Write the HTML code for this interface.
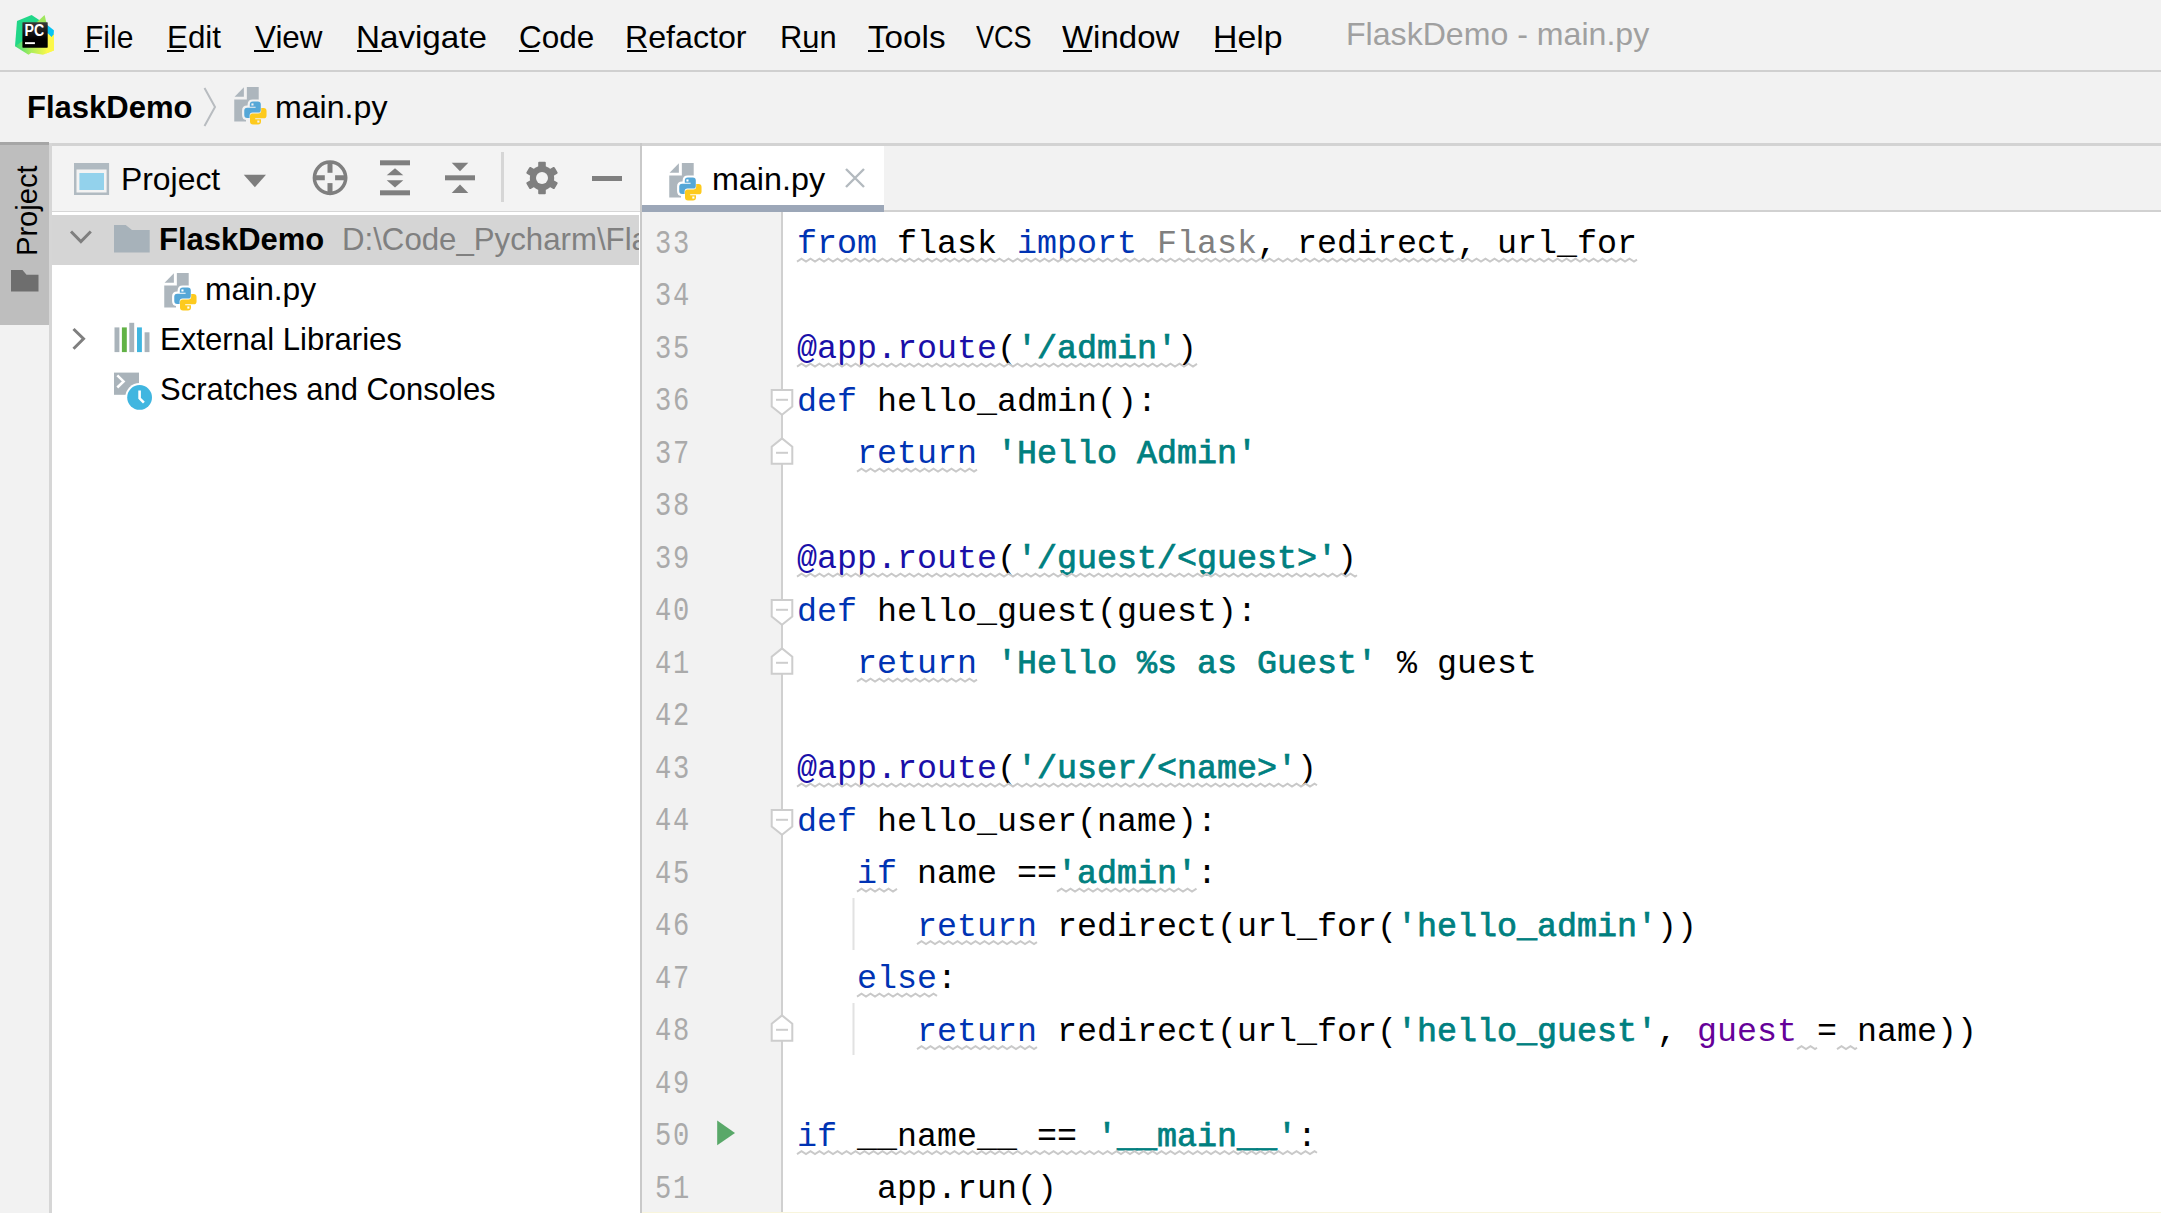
<!DOCTYPE html>
<html><head><meta charset="utf-8">
<style>
*{margin:0;padding:0;box-sizing:border-box}
html,body{width:2161px;height:1213px;overflow:hidden;background:#f2f2f2}
body{position:relative;font-family:"Liberation Sans",sans-serif;color:#000}
.a{position:absolute}
.t{position:absolute;white-space:pre;line-height:1;transform-origin:0 0}
svg{position:absolute;overflow:visible}
.code{position:absolute;left:797px;white-space:pre;font-family:"Liberation Mono",monospace;font-size:33.33px;line-height:1;color:#000}
.ln{position:absolute;white-space:pre;font-family:"Liberation Mono",monospace;font-size:33.33px;line-height:1;color:#aaaaaa}
.k{color:#0033b3}
.d{color:#1a0fa8}
.s{color:#008080;-webkit-text-stroke:0.75px #008080}
.g{color:#808080}
.p{color:#660099}
</style></head><body>
<div class="a" style="left:0;top:70px;width:2161px;height:2px;background:#d0d0d0"></div>
<div class="a" style="left:52px;top:142.5px;width:2109px;height:3px;background:#d3d3d3"></div>
<div class="a" style="left:0;top:142px;width:49px;height:183px;background:#bebebe"></div>
<div class="a" style="left:0;top:142px;width:49px;height:3px;background:#a6a6a6"></div>
<div class="a" style="left:49px;top:143px;width:3px;height:1070px;background:#d6d6d6"></div>
<div class="a" style="left:52px;top:146px;width:588px;height:65px;background:#f3f3f3"></div>
<div class="a" style="left:52px;top:211px;width:588px;height:1002px;background:#fff"></div>
<div class="a" style="left:52px;top:210.5px;width:588px;height:1.5px;background:#d6d6d6"></div>
<div class="a" style="left:52px;top:215px;width:587px;height:50px;background:#d5d5d5"></div>
<div class="a" style="left:640px;top:143px;width:2px;height:1070px;background:#c9c9c9"></div>
<div class="a" style="left:642px;top:146px;width:1519px;height:66px;background:#f2f2f2"></div>
<div class="a" style="left:642px;top:210px;width:1519px;height:2px;background:#d1d1d1"></div>
<div class="a" style="left:642px;top:146px;width:242px;height:59px;background:#fff"></div>
<div class="a" style="left:642px;top:205px;width:242px;height:7px;background:#9ca7b8"></div>
<div class="a" style="left:642px;top:212px;width:139px;height:1001px;background:#f2f2f2"></div>
<div class="a" style="left:783px;top:212px;width:1378px;height:1001px;background:#fff"></div>
<div class="a" style="left:781px;top:212px;width:2px;height:1001px;background:#d0d0d0"></div>
<div id="m_file" class="t" style="left:85.30px;top:20.91px;font-size:32px;font-weight:400;color:#000;transform:scaleX(0.9390);">File</div>
<div id="m_edit" class="t" style="left:167.43px;top:20.91px;font-size:32px;font-weight:400;color:#000;transform:scaleX(0.9799);">Edit</div>
<div id="m_view" class="t" style="left:255.21px;top:20.91px;font-size:32px;font-weight:400;color:#000;transform:scaleX(0.9813);">View</div>
<div id="m_nav" class="t" style="left:356.13px;top:20.91px;font-size:32px;font-weight:400;color:#000;transform:scaleX(1.0366);">Navigate</div>
<div id="m_code" class="t" style="left:519.40px;top:20.91px;font-size:32px;font-weight:400;color:#000;transform:scaleX(0.9841);">Code</div>
<div id="m_ref" class="t" style="left:625.18px;top:20.91px;font-size:32px;font-weight:400;color:#000;transform:scaleX(1.0052);">Refactor</div>
<div id="m_run" class="t" style="left:780.07px;top:20.91px;font-size:32px;font-weight:400;color:#000;transform:scaleX(0.9636);">Run</div>
<div id="m_tools" class="t" style="left:867.98px;top:20.91px;font-size:32px;font-weight:400;color:#000;transform:scaleX(1.0378);">Tools</div>
<div id="m_vcs" class="t" style="left:976.00px;top:20.91px;font-size:32px;font-weight:400;color:#000;transform:scaleX(0.8462);">VCS</div>
<div id="m_win" class="t" style="left:1062.00px;top:20.91px;font-size:32px;font-weight:400;color:#000;transform:scaleX(1.0305);">Window</div>
<div id="m_help" class="t" style="left:1212.86px;top:20.91px;font-size:32px;font-weight:400;color:#000;transform:scaleX(1.0570);">Help</div>
<div id="title" class="t" style="left:1346.19px;top:17.91px;font-size:32px;font-weight:400;color:#a0a0a0;transform:scaleX(1.0030);">FlaskDemo - main.py</div>
<div id="bc_proj" class="t" style="left:27.23px;top:90.91px;font-size:32px;font-weight:700;color:#000;transform:scaleX(0.9693);">FlaskDemo</div>
<div id="bc_file" class="t" style="left:274.79px;top:90.91px;font-size:32px;font-weight:400;color:#000;transform:scaleX(1.0036);">main.py</div>
<div id="ph_proj" class="t" style="left:121.41px;top:162.91px;font-size:32px;font-weight:400;color:#000;transform:scaleX(0.9959);">Project</div>
<div id="tab_file" class="t" style="left:711.98px;top:162.91px;font-size:32px;font-weight:400;color:#000;transform:scaleX(1.0087);">main.py</div>
<div id="tr_proj" class="t" style="left:159.47px;top:223.41px;font-size:32px;font-weight:700;color:#000;transform:scaleX(0.9673);">FlaskDemo</div>
<div id="tr_main" class="t" style="left:205.02px;top:272.91px;font-size:32px;font-weight:400;color:#000;transform:scaleX(0.9918);">main.py</div>
<div id="tr_ext" class="t" style="left:160.06px;top:323.41px;font-size:32px;font-weight:400;color:#000;transform:scaleX(0.9715);">External Libraries</div>
<div id="tr_scr" class="t" style="left:160.03px;top:372.91px;font-size:32px;font-weight:400;color:#000;transform:scaleX(0.9675);">Scratches and Consoles</div>
<div class="a" style="left:52px;top:200px;width:587px;height:80px;overflow:hidden"><div id="tr_path" class="t" style="left:289.55px;top:23.41px;font-size:32px;color:#808080;transform:scaleX(0.9750)">D:\Code_Pycharm\FlaskDemo</div></div>
<div class="a" style="left:84px;top:50px;width:15.0px;height:2px;background:#000"></div>
<div class="a" style="left:167px;top:50px;width:17.0px;height:2px;background:#000"></div>
<div class="a" style="left:254px;top:50px;width:19.7px;height:2px;background:#000"></div>
<div class="a" style="left:357.2px;top:50px;width:24.8px;height:2px;background:#000"></div>
<div class="a" style="left:519px;top:50px;width:19.8px;height:2px;background:#000"></div>
<div class="a" style="left:626.9px;top:50px;width:19.7px;height:2px;background:#000"></div>
<div class="a" style="left:799.5px;top:50px;width:17.5px;height:2px;background:#000"></div>
<div class="a" style="left:867.5px;top:50px;width:16.5px;height:2px;background:#000"></div>
<div class="a" style="left:1062.5px;top:50px;width:29.5px;height:2px;background:#000"></div>
<div class="a" style="left:1214.5px;top:50px;width:22.5px;height:2px;background:#000"></div>
<div class="ln" style="left:655.40px;top:227.97px;transform:scaleX(0.8125);transform-origin:0 0;letter-spacing:2.03px">33</div>
<div class="code" style="left:797.00px;top:228.47px"><span class="k">from</span> flask <span class="k">import</span> <span class="g">Flask</span>, redirect, url_for</div>
<div class="ln" style="left:655.40px;top:280.47px;transform:scaleX(0.8125);transform-origin:0 0;letter-spacing:2.03px">34</div>
<div class="ln" style="left:655.40px;top:332.97px;transform:scaleX(0.8125);transform-origin:0 0;letter-spacing:2.03px">35</div>
<div class="code" style="left:797.00px;top:333.47px"><span class="d">@app.route</span>(<span class="s">'/admin'</span>)</div>
<div class="ln" style="left:655.40px;top:385.47px;transform:scaleX(0.8125);transform-origin:0 0;letter-spacing:2.03px">36</div>
<div class="code" style="left:797.00px;top:385.97px"><span class="k">def</span> hello_admin():</div>
<div class="ln" style="left:655.40px;top:437.97px;transform:scaleX(0.8125);transform-origin:0 0;letter-spacing:2.03px">37</div>
<div class="code" style="left:797.00px;top:438.47px">   <span class="k">return</span> <span class="s">'Hello Admin'</span></div>
<div class="ln" style="left:655.40px;top:490.47px;transform:scaleX(0.8125);transform-origin:0 0;letter-spacing:2.03px">38</div>
<div class="ln" style="left:655.40px;top:542.97px;transform:scaleX(0.8125);transform-origin:0 0;letter-spacing:2.03px">39</div>
<div class="code" style="left:797.00px;top:543.47px"><span class="d">@app.route</span>(<span class="s">'/guest/&lt;guest&gt;'</span>)</div>
<div class="ln" style="left:655.40px;top:595.47px;transform:scaleX(0.8125);transform-origin:0 0;letter-spacing:2.03px">40</div>
<div class="code" style="left:797.00px;top:595.97px"><span class="k">def</span> hello_guest(guest):</div>
<div class="ln" style="left:655.40px;top:647.97px;transform:scaleX(0.8125);transform-origin:0 0;letter-spacing:2.03px">41</div>
<div class="code" style="left:797.00px;top:648.47px">   <span class="k">return</span> <span class="s">'Hello %s as Guest'</span> % guest</div>
<div class="ln" style="left:655.40px;top:700.47px;transform:scaleX(0.8125);transform-origin:0 0;letter-spacing:2.03px">42</div>
<div class="ln" style="left:655.40px;top:752.97px;transform:scaleX(0.8125);transform-origin:0 0;letter-spacing:2.03px">43</div>
<div class="code" style="left:797.00px;top:753.47px"><span class="d">@app.route</span>(<span class="s">'/user/&lt;name&gt;'</span>)</div>
<div class="ln" style="left:655.40px;top:805.47px;transform:scaleX(0.8125);transform-origin:0 0;letter-spacing:2.03px">44</div>
<div class="code" style="left:797.00px;top:805.97px"><span class="k">def</span> hello_user(name):</div>
<div class="ln" style="left:655.40px;top:857.97px;transform:scaleX(0.8125);transform-origin:0 0;letter-spacing:2.03px">45</div>
<div class="code" style="left:797.00px;top:858.47px">   <span class="k">if</span> name ==<span class="s">'admin'</span>:</div>
<div class="ln" style="left:655.40px;top:910.47px;transform:scaleX(0.8125);transform-origin:0 0;letter-spacing:2.03px">46</div>
<div class="code" style="left:797.00px;top:910.97px">      <span class="k">return</span> redirect(url_for(<span class="s">'hello_admin'</span>))</div>
<div class="ln" style="left:655.40px;top:962.97px;transform:scaleX(0.8125);transform-origin:0 0;letter-spacing:2.03px">47</div>
<div class="code" style="left:797.00px;top:963.47px">   <span class="k">else</span>:</div>
<div class="ln" style="left:655.40px;top:1015.47px;transform:scaleX(0.8125);transform-origin:0 0;letter-spacing:2.03px">48</div>
<div class="code" style="left:797.00px;top:1015.97px">      <span class="k">return</span> redirect(url_for(<span class="s">'hello_guest'</span>, <span class="p">guest</span> = name))</div>
<div class="ln" style="left:655.40px;top:1067.97px;transform:scaleX(0.8125);transform-origin:0 0;letter-spacing:2.03px">49</div>
<div class="ln" style="left:655.40px;top:1120.47px;transform:scaleX(0.8125);transform-origin:0 0;letter-spacing:2.03px">50</div>
<div class="code" style="left:797.00px;top:1120.97px"><span class="k">if</span> __name__ == <span class="s">'__main__'</span>:</div>
<div class="ln" style="left:655.40px;top:1172.97px;transform:scaleX(0.8125);transform-origin:0 0;letter-spacing:2.03px">51</div>
<div class="code" style="left:797.00px;top:1173.47px">    app.run()</div>
<svg style="left:0;top:0" width="2161" height="1213">
<polyline points="797.0,261.6 801.5,258.6 806.0,261.6 810.5,258.6 815.0,261.6 819.5,258.6 824.0,261.6 828.5,258.6 833.0,261.6 837.5,258.6 842.0,261.6 846.5,258.6 851.0,261.6 855.5,258.6 860.0,261.6 864.5,258.6 869.0,261.6 873.5,258.6 878.0,261.6 882.5,258.6 887.0,261.6 891.5,258.6 896.0,261.6 900.5,258.6 905.0,261.6 909.5,258.6 914.0,261.6 918.5,258.6 923.0,261.6 927.5,258.6 932.0,261.6 936.5,258.6 941.0,261.6 945.5,258.6 950.0,261.6 954.5,258.6 959.0,261.6 963.5,258.6 968.0,261.6 972.5,258.6 977.0,261.6 981.5,258.6 986.0,261.6 990.5,258.6 995.0,261.6 999.5,258.6 1004.0,261.6 1008.5,258.6 1013.0,261.6 1017.5,258.6 1022.0,261.6 1026.5,258.6 1031.0,261.6 1035.5,258.6 1040.0,261.6 1044.5,258.6 1049.0,261.6 1053.5,258.6 1058.0,261.6 1062.5,258.6 1067.0,261.6 1071.5,258.6 1076.0,261.6 1080.5,258.6 1085.0,261.6 1089.5,258.6 1094.0,261.6 1098.5,258.6 1103.0,261.6 1107.5,258.6 1112.0,261.6 1116.5,258.6 1121.0,261.6 1125.5,258.6 1130.0,261.6 1134.5,258.6 1139.0,261.6 1143.5,258.6 1148.0,261.6 1152.5,258.6 1157.0,261.6 1161.5,258.6 1166.0,261.6 1170.5,258.6 1175.0,261.6 1179.5,258.6 1184.0,261.6 1188.5,258.6 1193.0,261.6 1197.5,258.6 1202.0,261.6 1206.5,258.6 1211.0,261.6 1215.5,258.6 1220.0,261.6 1224.5,258.6 1229.0,261.6 1233.5,258.6 1238.0,261.6 1242.5,258.6 1247.0,261.6 1251.5,258.6 1256.0,261.6 1260.5,258.6 1265.0,261.6 1269.5,258.6 1274.0,261.6 1278.5,258.6 1283.0,261.6 1287.5,258.6 1292.0,261.6 1296.5,258.6 1301.0,261.6 1305.5,258.6 1310.0,261.6 1314.5,258.6 1319.0,261.6 1323.5,258.6 1328.0,261.6 1332.5,258.6 1337.0,261.6 1341.5,258.6 1346.0,261.6 1350.5,258.6 1355.0,261.6 1359.5,258.6 1364.0,261.6 1368.5,258.6 1373.0,261.6 1377.5,258.6 1382.0,261.6 1386.5,258.6 1391.0,261.6 1395.5,258.6 1400.0,261.6 1404.5,258.6 1409.0,261.6 1413.5,258.6 1418.0,261.6 1422.5,258.6 1427.0,261.6 1431.5,258.6 1436.0,261.6 1440.5,258.6 1445.0,261.6 1449.5,258.6 1454.0,261.6 1458.5,258.6 1463.0,261.6 1467.5,258.6 1472.0,261.6 1476.5,258.6 1481.0,261.6 1485.5,258.6 1490.0,261.6 1494.5,258.6 1499.0,261.6 1503.5,258.6 1508.0,261.6 1512.5,258.6 1517.0,261.6 1521.5,258.6 1526.0,261.6 1530.5,258.6 1535.0,261.6 1539.5,258.6 1544.0,261.6 1548.5,258.6 1553.0,261.6 1557.5,258.6 1562.0,261.6 1566.5,258.6 1571.0,261.6 1575.5,258.6 1580.0,261.6 1584.5,258.6 1589.0,261.6 1593.5,258.6 1598.0,261.6 1602.5,258.6 1607.0,261.6 1611.5,258.6 1616.0,261.6 1620.5,258.6 1625.0,261.6 1629.5,258.6 1634.0,261.6 1637.0,259.6" fill="none" stroke="#c9c9c9" stroke-width="1.9"/>
<polyline points="797.0,366.6 801.5,363.6 806.0,366.6 810.5,363.6 815.0,366.6 819.5,363.6 824.0,366.6 828.5,363.6 833.0,366.6 837.5,363.6 842.0,366.6 846.5,363.6 851.0,366.6 855.5,363.6 860.0,366.6 864.5,363.6 869.0,366.6 873.5,363.6 878.0,366.6 882.5,363.6 887.0,366.6 891.5,363.6 896.0,366.6 900.5,363.6 905.0,366.6 909.5,363.6 914.0,366.6 918.5,363.6 923.0,366.6 927.5,363.6 932.0,366.6 936.5,363.6 941.0,366.6 945.5,363.6 950.0,366.6 954.5,363.6 959.0,366.6 963.5,363.6 968.0,366.6 972.5,363.6 977.0,366.6 981.5,363.6 986.0,366.6 990.5,363.6 995.0,366.6 999.5,363.6 1004.0,366.6 1008.5,363.6 1013.0,366.6 1017.5,363.6 1022.0,366.6 1026.5,363.6 1031.0,366.6 1035.5,363.6 1040.0,366.6 1044.5,363.6 1049.0,366.6 1053.5,363.6 1058.0,366.6 1062.5,363.6 1067.0,366.6 1071.5,363.6 1076.0,366.6 1080.5,363.6 1085.0,366.6 1089.5,363.6 1094.0,366.6 1098.5,363.6 1103.0,366.6 1107.5,363.6 1112.0,366.6 1116.5,363.6 1121.0,366.6 1125.5,363.6 1130.0,366.6 1134.5,363.6 1139.0,366.6 1143.5,363.6 1148.0,366.6 1152.5,363.6 1157.0,366.6 1161.5,363.6 1166.0,366.6 1170.5,363.6 1175.0,366.6 1179.5,363.6 1184.0,366.6 1188.5,363.6 1193.0,366.6 1197.0,363.9" fill="none" stroke="#c9c9c9" stroke-width="1.9"/>
<polyline points="857.0,471.6 861.5,468.6 866.0,471.6 870.5,468.6 875.0,471.6 879.5,468.6 884.0,471.6 888.5,468.6 893.0,471.6 897.5,468.6 902.0,471.6 906.5,468.6 911.0,471.6 915.5,468.6 920.0,471.6 924.5,468.6 929.0,471.6 933.5,468.6 938.0,471.6 942.5,468.6 947.0,471.6 951.5,468.6 956.0,471.6 960.5,468.6 965.0,471.6 969.5,468.6 974.0,471.6 977.0,469.6" fill="none" stroke="#c9c9c9" stroke-width="1.9"/>
<polyline points="797.0,576.6 801.5,573.6 806.0,576.6 810.5,573.6 815.0,576.6 819.5,573.6 824.0,576.6 828.5,573.6 833.0,576.6 837.5,573.6 842.0,576.6 846.5,573.6 851.0,576.6 855.5,573.6 860.0,576.6 864.5,573.6 869.0,576.6 873.5,573.6 878.0,576.6 882.5,573.6 887.0,576.6 891.5,573.6 896.0,576.6 900.5,573.6 905.0,576.6 909.5,573.6 914.0,576.6 918.5,573.6 923.0,576.6 927.5,573.6 932.0,576.6 936.5,573.6 941.0,576.6 945.5,573.6 950.0,576.6 954.5,573.6 959.0,576.6 963.5,573.6 968.0,576.6 972.5,573.6 977.0,576.6 981.5,573.6 986.0,576.6 990.5,573.6 995.0,576.6 999.5,573.6 1004.0,576.6 1008.5,573.6 1013.0,576.6 1017.5,573.6 1022.0,576.6 1026.5,573.6 1031.0,576.6 1035.5,573.6 1040.0,576.6 1044.5,573.6 1049.0,576.6 1053.5,573.6 1058.0,576.6 1062.5,573.6 1067.0,576.6 1071.5,573.6 1076.0,576.6 1080.5,573.6 1085.0,576.6 1089.5,573.6 1094.0,576.6 1098.5,573.6 1103.0,576.6 1107.5,573.6 1112.0,576.6 1116.5,573.6 1121.0,576.6 1125.5,573.6 1130.0,576.6 1134.5,573.6 1139.0,576.6 1143.5,573.6 1148.0,576.6 1152.5,573.6 1157.0,576.6 1161.5,573.6 1166.0,576.6 1170.5,573.6 1175.0,576.6 1179.5,573.6 1184.0,576.6 1188.5,573.6 1193.0,576.6 1197.5,573.6 1202.0,576.6 1206.5,573.6 1211.0,576.6 1215.5,573.6 1220.0,576.6 1224.5,573.6 1229.0,576.6 1233.5,573.6 1238.0,576.6 1242.5,573.6 1247.0,576.6 1251.5,573.6 1256.0,576.6 1260.5,573.6 1265.0,576.6 1269.5,573.6 1274.0,576.6 1278.5,573.6 1283.0,576.6 1287.5,573.6 1292.0,576.6 1296.5,573.6 1301.0,576.6 1305.5,573.6 1310.0,576.6 1314.5,573.6 1319.0,576.6 1323.5,573.6 1328.0,576.6 1332.5,573.6 1337.0,576.6 1341.5,573.6 1346.0,576.6 1350.5,573.6 1355.0,576.6 1357.0,575.3" fill="none" stroke="#c9c9c9" stroke-width="1.9"/>
<polyline points="857.0,681.6 861.5,678.6 866.0,681.6 870.5,678.6 875.0,681.6 879.5,678.6 884.0,681.6 888.5,678.6 893.0,681.6 897.5,678.6 902.0,681.6 906.5,678.6 911.0,681.6 915.5,678.6 920.0,681.6 924.5,678.6 929.0,681.6 933.5,678.6 938.0,681.6 942.5,678.6 947.0,681.6 951.5,678.6 956.0,681.6 960.5,678.6 965.0,681.6 969.5,678.6 974.0,681.6 977.0,679.6" fill="none" stroke="#c9c9c9" stroke-width="1.9"/>
<polyline points="797.0,786.6 801.5,783.6 806.0,786.6 810.5,783.6 815.0,786.6 819.5,783.6 824.0,786.6 828.5,783.6 833.0,786.6 837.5,783.6 842.0,786.6 846.5,783.6 851.0,786.6 855.5,783.6 860.0,786.6 864.5,783.6 869.0,786.6 873.5,783.6 878.0,786.6 882.5,783.6 887.0,786.6 891.5,783.6 896.0,786.6 900.5,783.6 905.0,786.6 909.5,783.6 914.0,786.6 918.5,783.6 923.0,786.6 927.5,783.6 932.0,786.6 936.5,783.6 941.0,786.6 945.5,783.6 950.0,786.6 954.5,783.6 959.0,786.6 963.5,783.6 968.0,786.6 972.5,783.6 977.0,786.6 981.5,783.6 986.0,786.6 990.5,783.6 995.0,786.6 999.5,783.6 1004.0,786.6 1008.5,783.6 1013.0,786.6 1017.5,783.6 1022.0,786.6 1026.5,783.6 1031.0,786.6 1035.5,783.6 1040.0,786.6 1044.5,783.6 1049.0,786.6 1053.5,783.6 1058.0,786.6 1062.5,783.6 1067.0,786.6 1071.5,783.6 1076.0,786.6 1080.5,783.6 1085.0,786.6 1089.5,783.6 1094.0,786.6 1098.5,783.6 1103.0,786.6 1107.5,783.6 1112.0,786.6 1116.5,783.6 1121.0,786.6 1125.5,783.6 1130.0,786.6 1134.5,783.6 1139.0,786.6 1143.5,783.6 1148.0,786.6 1152.5,783.6 1157.0,786.6 1161.5,783.6 1166.0,786.6 1170.5,783.6 1175.0,786.6 1179.5,783.6 1184.0,786.6 1188.5,783.6 1193.0,786.6 1197.5,783.6 1202.0,786.6 1206.5,783.6 1211.0,786.6 1215.5,783.6 1220.0,786.6 1224.5,783.6 1229.0,786.6 1233.5,783.6 1238.0,786.6 1242.5,783.6 1247.0,786.6 1251.5,783.6 1256.0,786.6 1260.5,783.6 1265.0,786.6 1269.5,783.6 1274.0,786.6 1278.5,783.6 1283.0,786.6 1287.5,783.6 1292.0,786.6 1296.5,783.6 1301.0,786.6 1305.5,783.6 1310.0,786.6 1314.5,783.6 1317.0,785.3" fill="none" stroke="#c9c9c9" stroke-width="1.9"/>
<polyline points="857.0,891.6 861.5,888.6 866.0,891.6 870.5,888.6 875.0,891.6 879.5,888.6 884.0,891.6 888.5,888.6 893.0,891.6 897.0,888.9" fill="none" stroke="#c9c9c9" stroke-width="1.9"/>
<polyline points="1057.0,891.6 1061.5,888.6 1066.0,891.6 1070.5,888.6 1075.0,891.6 1079.5,888.6 1084.0,891.6 1088.5,888.6 1093.0,891.6 1097.5,888.6 1102.0,891.6 1106.5,888.6 1111.0,891.6 1115.5,888.6 1120.0,891.6 1124.5,888.6 1129.0,891.6 1133.5,888.6 1138.0,891.6 1142.5,888.6 1147.0,891.6 1151.5,888.6 1156.0,891.6 1160.5,888.6 1165.0,891.6 1169.5,888.6 1174.0,891.6 1178.5,888.6 1183.0,891.6 1187.5,888.6 1192.0,891.6 1196.5,888.6" fill="none" stroke="#c9c9c9" stroke-width="1.9"/>
<polyline points="917.0,944.1 921.5,941.1 926.0,944.1 930.5,941.1 935.0,944.1 939.5,941.1 944.0,944.1 948.5,941.1 953.0,944.1 957.5,941.1 962.0,944.1 966.5,941.1 971.0,944.1 975.5,941.1 980.0,944.1 984.5,941.1 989.0,944.1 993.5,941.1 998.0,944.1 1002.5,941.1 1007.0,944.1 1011.5,941.1 1016.0,944.1 1020.5,941.1 1025.0,944.1 1029.5,941.1 1034.0,944.1 1037.0,942.1" fill="none" stroke="#c9c9c9" stroke-width="1.9"/>
<polyline points="857.0,996.6 861.5,993.6 866.0,996.6 870.5,993.6 875.0,996.6 879.5,993.6 884.0,996.6 888.5,993.6 893.0,996.6 897.5,993.6 902.0,996.6 906.5,993.6 911.0,996.6 915.5,993.6 920.0,996.6 924.5,993.6 929.0,996.6 933.5,993.6 937.0,995.9" fill="none" stroke="#c9c9c9" stroke-width="1.9"/>
<polyline points="917.0,1049.1 921.5,1046.1 926.0,1049.1 930.5,1046.1 935.0,1049.1 939.5,1046.1 944.0,1049.1 948.5,1046.1 953.0,1049.1 957.5,1046.1 962.0,1049.1 966.5,1046.1 971.0,1049.1 975.5,1046.1 980.0,1049.1 984.5,1046.1 989.0,1049.1 993.5,1046.1 998.0,1049.1 1002.5,1046.1 1007.0,1049.1 1011.5,1046.1 1016.0,1049.1 1020.5,1046.1 1025.0,1049.1 1029.5,1046.1 1034.0,1049.1 1037.0,1047.1" fill="none" stroke="#c9c9c9" stroke-width="1.9"/>
<polyline points="1797.0,1049.1 1801.5,1046.1 1806.0,1049.1 1810.5,1046.1 1815.0,1049.1 1817.0,1047.8" fill="none" stroke="#c9c9c9" stroke-width="1.9"/>
<polyline points="1837.0,1049.1 1841.5,1046.1 1846.0,1049.1 1850.5,1046.1 1855.0,1049.1 1857.0,1047.8" fill="none" stroke="#c9c9c9" stroke-width="1.9"/>
<polyline points="797.0,1154.1 801.5,1151.1 806.0,1154.1 810.5,1151.1 815.0,1154.1 819.5,1151.1 824.0,1154.1 828.5,1151.1 833.0,1154.1 837.5,1151.1 842.0,1154.1 846.5,1151.1 851.0,1154.1 855.5,1151.1 860.0,1154.1 864.5,1151.1 869.0,1154.1 873.5,1151.1 878.0,1154.1 882.5,1151.1 887.0,1154.1 891.5,1151.1 896.0,1154.1 900.5,1151.1 905.0,1154.1 909.5,1151.1 914.0,1154.1 918.5,1151.1 923.0,1154.1 927.5,1151.1 932.0,1154.1 936.5,1151.1 941.0,1154.1 945.5,1151.1 950.0,1154.1 954.5,1151.1 959.0,1154.1 963.5,1151.1 968.0,1154.1 972.5,1151.1 977.0,1154.1 981.5,1151.1 986.0,1154.1 990.5,1151.1 995.0,1154.1 999.5,1151.1 1004.0,1154.1 1008.5,1151.1 1013.0,1154.1 1017.5,1151.1 1022.0,1154.1 1026.5,1151.1 1031.0,1154.1 1035.5,1151.1 1040.0,1154.1 1044.5,1151.1 1049.0,1154.1 1053.5,1151.1 1058.0,1154.1 1062.5,1151.1 1067.0,1154.1 1071.5,1151.1 1076.0,1154.1 1080.5,1151.1 1085.0,1154.1 1089.5,1151.1 1094.0,1154.1 1098.5,1151.1 1103.0,1154.1 1107.5,1151.1 1112.0,1154.1 1116.5,1151.1 1121.0,1154.1 1125.5,1151.1 1130.0,1154.1 1134.5,1151.1 1139.0,1154.1 1143.5,1151.1 1148.0,1154.1 1152.5,1151.1 1157.0,1154.1 1161.5,1151.1 1166.0,1154.1 1170.5,1151.1 1175.0,1154.1 1179.5,1151.1 1184.0,1154.1 1188.5,1151.1 1193.0,1154.1 1197.5,1151.1 1202.0,1154.1 1206.5,1151.1 1211.0,1154.1 1215.5,1151.1 1220.0,1154.1 1224.5,1151.1 1229.0,1154.1 1233.5,1151.1 1238.0,1154.1 1242.5,1151.1 1247.0,1154.1 1251.5,1151.1 1256.0,1154.1 1260.5,1151.1 1265.0,1154.1 1269.5,1151.1 1274.0,1154.1 1278.5,1151.1 1283.0,1154.1 1287.5,1151.1 1292.0,1154.1 1296.5,1151.1 1301.0,1154.1 1305.5,1151.1 1310.0,1154.1 1314.5,1151.1 1317.0,1152.8" fill="none" stroke="#c9c9c9" stroke-width="1.9"/>
</svg>
<!-- PyCharm logo -->
<svg style="left:0;top:0" width="70" height="70" viewBox="0 0 70 70">
<defs>
<linearGradient id="lgb" x1="15" y1="0" x2="48" y2="0" gradientUnits="userSpaceOnUse">
<stop offset="0" stop-color="#35da7e"/><stop offset="0.45" stop-color="#a6ec5c"/><stop offset="1" stop-color="#fcf84a"/>
</linearGradient>
<linearGradient id="lgs" x1="0" y1="22" x2="0" y2="60" gradientUnits="userSpaceOnUse">
<stop offset="0" stop-color="#3a3a3a"/><stop offset="0.45" stop-color="#000"/>
</linearGradient>
</defs>
<polygon points="15,46.3 22,34 53.9,34 53.9,50.4 43,54.7 31.4,52.8 28.5,54.7" fill="url(#lgb)"/>
<polygon points="17,20.9 31.6,14.9 40,20.5 30,36 15,46.3" fill="#21d789"/>
<polygon points="36,23 44.6,14.9 46.5,23" fill="#9fe75d"/>
<polygon points="46,24 53.9,30.2 53.7,34.3 51.6,37.2 47,33" fill="#07c3f2"/>
<polygon points="48,33.5 51.6,37.2 53.8,34.3 53.9,50.4 46,53.5 47,40" fill="#fcf84a"/>
<rect x="22.4" y="22.2" width="25.3" height="25.5" rx="0.6" fill="url(#lgs)"/>
<text x="24.6" y="36.4" font-family="Liberation Sans" font-weight="bold" font-size="16.8" fill="#fff" textLength="19.6" lengthAdjust="spacingAndGlyphs">PC</text>
<rect x="25" y="42.2" width="9.9" height="1.9" fill="#fff"/>
</svg>

<!-- breadcrumb chevron -->
<svg style="left:200px;top:85px" width="20" height="44" viewBox="0 0 20 44">
<polyline points="4.5,3 15,22 4.5,41" fill="none" stroke="#b8bcc0" stroke-width="2"/>
</svg>

<!-- python file icons -->
<svg style="left:234px;top:87px;--ol:#f2f2f2" width="33" height="38" viewBox="0 0 33 38">
<use href="#pyf"/>
</svg>
<svg style="left:164px;top:272.5px" width="33" height="38" viewBox="0 0 33 38">
<use href="#pyf"/>
</svg>
<svg style="left:669.4px;top:162.5px" width="33" height="38" viewBox="0 0 33 38">
<defs>
<g id="pyf">
<polygon points="0.6,9.8 9.9,0.3 9.9,9.8" fill="#adb6bd"/>
<path d="M12.85,0 H24.7 V26 H12 V34.6 H0.25 V12.5 H12.85 Z" fill="#adb6bd"/>
<g id="pylogo">
<path id="pyb" d="M18.8,14.6 H23.8 Q26.8,14.6 26.8,17.6 V23 Q26.8,25.56 24.3,25.56 H18.6 Q15.6,25.56 15.6,28.5 V31.1 H13.2 Q10.26,31.1 10.26,28.1 V23.6 Q10.26,20.7 13.2,20.7 H21.6 V19.8 H15.8 V17.6 Q15.8,14.6 18.8,14.6 Z"/>
</g>
<use href="#pyb" style="fill:var(--ol,#fff);stroke:var(--ol,#fff)" stroke-width="4.4" stroke-linejoin="round"/>
<use href="#pyb" style="fill:var(--ol,#fff);stroke:var(--ol,#fff)" stroke-width="4.4" stroke-linejoin="round" transform="rotate(180 21.4 26)"/>
<use href="#pyb" fill="#55a7d7"/>
<use href="#pyb" fill="#fdca1d" transform="rotate(180 21.4 26)"/>
<rect x="17.4" y="16.4" width="2.1" height="2.1" style="fill:var(--ol,#fff)"/>
<rect x="23.3" y="33.5" width="2.1" height="2.1" style="fill:var(--ol,#fff)"/>
</g>
</defs>
<use href="#pyf"/>
</svg>

<!-- project view icon -->
<svg style="left:74px;top:163px" width="35.1" height="32" viewBox="0 0 35.1 32">
<rect x="0" y="0" width="35.1" height="32" fill="#b0bac1"/>
<rect x="2.5" y="6.5" width="30.1" height="23" fill="#f3f3f3"/>
<rect x="5.4" y="10" width="24.6" height="17" fill="#93d2ec"/>
</svg>
<!-- dropdown triangle -->
<svg style="left:243px;top:174px" width="24" height="14" viewBox="0 0 24 14">
<polygon points="0.75,0.7 23,0.7 11.9,13.2" fill="#7d7d7d"/>
</svg>
<!-- crosshair -->
<svg style="left:310px;top:158px" width="40" height="40" viewBox="0 0 40 40">
<circle cx="20.03" cy="19.75" r="15.65" fill="none" stroke="#7f7f7f" stroke-width="3.5"/>
<rect x="17.5" y="3" width="5" height="11.8" fill="#7f7f7f"/>
<rect x="17.5" y="25.1" width="5" height="11.5" fill="#7f7f7f"/>
<rect x="3" y="17.25" width="11.8" height="5" fill="#7f7f7f"/>
<rect x="25.1" y="17.25" width="12" height="5" fill="#7f7f7f"/>
</svg>
<!-- expand all -->
<svg style="left:380px;top:160px" width="31" height="36" viewBox="0 0 31 36">
<rect x="0" y="0.3" width="30" height="5" fill="#7f7f7f"/>
<rect x="0" y="30.3" width="30" height="5" fill="#7f7f7f"/>
<polygon points="6.7,15.3 23.3,15.3 15,8.3" fill="#7f7f7f"/>
<polygon points="6.7,20.3 23.3,20.3 15,27.5" fill="#7f7f7f"/>
</svg>
<!-- collapse all -->
<svg style="left:445px;top:160px" width="31" height="36" viewBox="0 0 31 36">
<rect x="0" y="15.3" width="30" height="5" fill="#7f7f7f"/>
<polygon points="6.7,2.8 23.3,2.8 15,11.2" fill="#7f7f7f"/>
<polygon points="6.7,33 23.3,33 15,24.5" fill="#7f7f7f"/>
</svg>
<!-- separator -->
<div class="a" style="left:500.5px;top:152px;width:3px;height:50px;background:#d6d6d6"></div>
<!-- gear -->
<svg style="left:522px;top:158px" width="40" height="40" viewBox="-20 -20 40 40">
<g fill="#7f7f7f">
<circle r="12.2"/>
<rect x="-3.8" y="-16.3" width="7.6" height="32.6" rx="1"/>
<rect x="-3.8" y="-16.3" width="7.6" height="32.6" rx="1" transform="rotate(60)"/>
<rect x="-3.8" y="-16.3" width="7.6" height="32.6" rx="1" transform="rotate(120)"/>
</g>
<circle r="6" fill="#f3f3f3"/>
</svg>
<!-- minimize -->
<div class="a" style="left:592px;top:175.6px;width:30px;height:5px;background:#7f7f7f"></div>

<!-- tab close -->
<svg style="left:844px;top:167px" width="22" height="22" viewBox="0 0 22 22">
<path d="M2,2 L20,20 M20,2 L2,20" stroke="#b3babf" stroke-width="2.4" fill="none"/>
</svg>

<!-- tree chevrons -->
<svg style="left:68px;top:228px" width="26" height="20" viewBox="0 0 26 20">
<polyline points="3,3.5 12.9,13.5 22.8,3.5" fill="none" stroke="#7f7f7f" stroke-width="3"/>
</svg>
<svg style="left:70px;top:326px" width="20" height="26" viewBox="0 0 20 26">
<polyline points="3.5,3 13.5,12.8 3.5,22.8" fill="none" stroke="#7f7f7f" stroke-width="3"/>
</svg>
<!-- folder -->
<svg style="left:114px;top:225px" width="35.7" height="27.4" viewBox="0 0 35.7 27.4">
<path d="M0,0 H11.7 L18,5 H35.7 V27.4 H0 Z" fill="#a7b2ba"/>
</svg>
<!-- external libraries -->
<svg style="left:114px;top:322px" width="37" height="31" viewBox="0 0 37 31">
<rect x="0.5" y="5.4" width="4.9" height="24.7" fill="#a9b3ba"/>
<rect x="7.9" y="5.4" width="4.9" height="24.7" fill="#62b246"/>
<rect x="15.3" y="0.8" width="4.9" height="29.3" fill="#a9b3ba"/>
<rect x="23" y="5.4" width="4.9" height="24.7" fill="#40b6e0"/>
<rect x="30.6" y="10.3" width="4.9" height="19.8" fill="#a9b3ba"/>
</svg>
<!-- scratches -->
<svg style="left:114px;top:372px" width="40" height="40" viewBox="0 0 40 40">
<rect x="0" y="0.6" width="25" height="22.2" fill="#a9b3ba"/>
<polyline points="3.3,3.3 9.6,9.4 3.3,15.5" fill="none" stroke="#fff" stroke-width="2.5"/>
<circle cx="25.6" cy="25.4" r="14.3" fill="#fff"/>
<circle cx="25.6" cy="25.4" r="12.4" fill="#40b6e0"/>
<polyline points="25.6,18.5 25.6,26.3 29.9,30.6" fill="none" stroke="#fff" stroke-width="2.6"/>
</svg>

<!-- left strip: vertical Project + folder -->
<div class="t" style="left:13.2px;top:255.8px;font-size:29px;transform:rotate(-90deg) scaleX(1.004);transform-origin:0 0;color:#000">Project</div>
<svg style="left:11px;top:270px" width="28" height="22" viewBox="0 0 28 22">
<path d="M0,0 H11.5 L15.5,4.8 H27.5 V21.5 H0 Z" fill="#6e6e6e"/>
</svg>

<div class="a" style="left:642px;top:1212px;width:1519px;height:1px;background:#f8f5dc"></div>
<!-- gutter fold markers -->
<svg style="left:0;top:0" width="2161" height="1213">
<defs>
<g id="fd"><path d="M-10.3,-12 H10.3 V4.5 L0,12.8 L-10.3,4.5 Z" fill="#fff" stroke="#cdcdcd" stroke-width="2"/><path d="M-6,-2.2 H6" stroke="#cdcdcd" stroke-width="2"/></g>
<g id="fu"><path d="M-10.3,12.7 H10.3 V-4.3 L0,-12.6 L-10.3,-4.3 Z" fill="#fff" stroke="#cdcdcd" stroke-width="2"/><path d="M-6,1.8 H6" stroke="#cdcdcd" stroke-width="2"/></g>
</defs>
<use href="#fd" x="782" y="402"/>
<use href="#fu" x="782" y="451"/>
<use href="#fd" x="782" y="612"/>
<use href="#fu" x="782" y="661"/>
<use href="#fd" x="782" y="822"/>
<use href="#fu" x="782" y="1028"/>
<polygon points="717.2,1120.5 735,1133 717.2,1145.3" fill="#59a869"/>
<rect x="852.5" y="898" width="2" height="52" fill="#e2e2e2"/>
<rect x="852.5" y="1003" width="2" height="52" fill="#e2e2e2"/>
</svg>

</body></html>
